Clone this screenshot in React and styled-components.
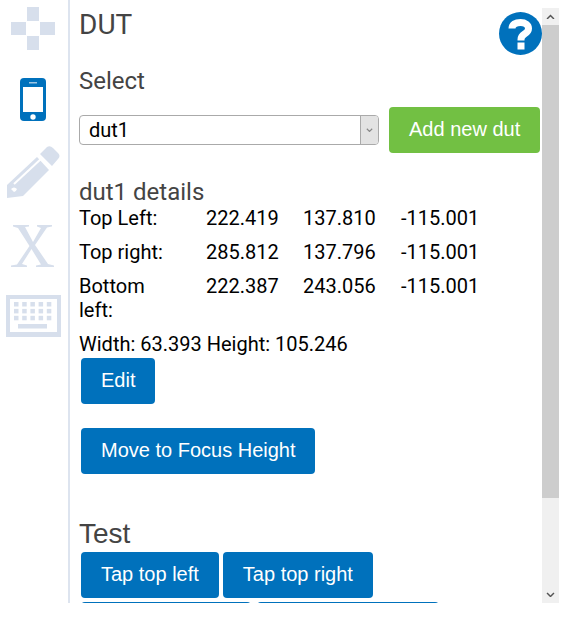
import React from 'react';
import styled, { createGlobalStyle } from 'styled-components';

const Global = createGlobalStyle`
  html, body {
    margin: 0;
    padding: 0;
    background: #fff;
    overflow: hidden;
  }
  body {
    font-family: Roboto, "Liberation Sans", Arial, sans-serif;
  }
`;

const Page = styled.div`
  width: 562px;
  height: 620px;
  display: flex;
  align-items: flex-start;
`;

const Sidebar = styled.nav`
  width: 70px;
  height: 603px;
  flex: none;
  box-sizing: border-box;
  border-right: 2px solid #dde4ef;
  display: flex;
  flex-direction: column;
  align-items: center;
  padding-right: 2px;
`;

const IconSlot = styled.div`
  display: flex;
  margin-top: ${p => p.$top}px;
`;

const Scroller = styled.main`
  position: relative;
  width: 489px;
  height: 603px;
  flex: none;
  overflow: hidden;
  box-sizing: border-box;
  padding: 9px 0 0 9px;
`;

const HelpBadge = styled.div`
  position: absolute;
  top: 12px;
  right: 17px;
  width: 43px;
  height: 43px;
`;

const Title = styled.h1`
  margin: 0;
  font-size: 28px;
  line-height: 32px;
  font-weight: 400;
  color: #444;
`;

const SubTitle = styled.h2`
  margin: 25px 0 0;
  font-size: 24px;
  line-height: 30px;
  font-weight: 400;
  color: #444;
`;

const SelectRow = styled.div`
  display: flex;
  align-items: center;
  gap: 10px;
  margin-top: 11px;
`;

const Select = styled.div`
  width: 300px;
  height: 30px;
  box-sizing: border-box;
  border: 1px solid #aaa;
  border-radius: 4px;
  display: flex;
  align-items: center;
  justify-content: space-between;
  padding-left: 9px;
  font-size: 20px;
  color: #000;
  overflow: hidden;
`;

const Arrow = styled.span`
  width: 17px;
  height: 100%;
  background: #e3e3e3;
  border-left: 1px solid #aaa;
  display: flex;
  align-items: center;
  justify-content: center;
`;

const Button = styled.button`
  display: block;
  flex: none;
  width: ${p => (p.$w ? `${p.$w}px` : 'auto')};
  height: 46px;
  padding: 0 20px 2px;
  border: 0;
  border-radius: 4px;
  background: ${p => (p.$green ? '#72c043' : '#0071bc')};
  color: #fff;
  font-family: "Liberation Sans", Arial, sans-serif;
  font-size: 20px;
  white-space: nowrap;
`;

const DetailsTitle = styled.h3`
  margin: 27px 0 2px;
  font-size: 24px;
  line-height: 24px;
  font-weight: 400;
  color: #444;
`;

const Coordinates = styled.div`
  display: grid;
  grid-template-columns: 127px 97px 98px 90px;
  width: 412px;
  font-size: 20px;
  line-height: 24px;
  color: #000;
`;

const Cell = styled.div`
  padding-bottom: 10px;
  white-space: nowrap;
`;

const LabelCell = styled.div`
  padding: 0 30px 10px 0;
`;

const SizeLine = styled.div`
  font-size: 20px;
  line-height: 24px;
  color: #000;
`;

const ButtonRow = styled.div`
  display: flex;
  gap: 4px;
  padding-left: 2px;
  margin-top: ${p => p.$top || 0}px;
`;

const SecondRow = styled(ButtonRow)`
  gap: 6px;
`;

const TestTitle = styled.h2`
  margin: 43px 0 1px;
  font-family: "Liberation Sans", Arial, sans-serif;
  font-size: 28px;
  line-height: 34px;
  font-weight: 400;
  color: #444;
`;

const Scrollbar = styled.div`
  position: absolute;
  top: 8px;
  right: 0;
  width: 17px;
  height: 595px;
  background: #f0f0f0;
  display: flex;
  flex-direction: column;
  align-items: center;
`;

const ScrollEnd = styled.div`
  height: 17px;
  flex: none;
  display: flex;
  align-items: center;
  justify-content: center;
`;

const Thumb = styled.div`
  width: 100%;
  height: 473px;
  flex: none;
  background: #cdcdcd;
`;

const ScrollSpace = styled.div`
  flex: 1;
`;

const Plus = () => (
  <svg width="44" height="43" viewBox="0 0 44 43">
    <path fill="#d7dfec" d="M16 0h12v14H16zM16 29h12v14H16zM0 15h15v13H0zM29 15h15v13H29z" />
  </svg>
);

const Phone = () => (
  <svg width="28" height="44" viewBox="0 0 28 44">
    <rect width="26" height="43" x="1" rx="4" fill="#0071bc" />
    <rect x="4" y="9" width="20" height="25" fill="#fff" />
    <rect x="10" y="4" width="8" height="1.5" fill="#9cc6e4" />
    <circle cx="14" cy="39" r="2.7" fill="#fff" />
  </svg>
);

const Pencil = () => (
  <svg width="54" height="52" viewBox="0 0 54 52">
    <path fill="#d7dfec" d="M31 11 43 24 17 50 1 52 1 39Z" />
    <path fill="#d7dfec" d="M34 8 41 1Q44-1 47 2L52 7Q55 10 52 13L46 20Z" />
    <path stroke="#fff" strokeWidth="2" fill="none" d="M8 38 36 12" />
    <path fill="#fff" d="M5 43q3-3 6 0q-1 3-3 3z" />
  </svg>
);

const XMark = () => (
  <svg width="44" height="42" viewBox="0 0 44 42">
    <path fill="#d7dfec" d="M2 0h16v1.5l-4 .5L22 17 30 3l-4-1.500V0h15v1.500l-5 1L24 20l13 19 6 1.500V42H25v-1.500l5-1L20.500 24 11 39l5 1.500V42H0v-1.500l6-1L18.500 21 7 3 2 1.500Z" />
  </svg>
);

const Keyboard = () => {
  const keys = [];
  for (let row = 0; row < 3; row++) {
    for (let col = 0; col < 5; col++) {
      keys.push(<rect key={`${row}-${col}`} x={8 + col * 8.2} y={7 + row * 6.900} width="4.500" height="4.500" fill="#d7dfec" />);
    }
  }
  return (
    <svg width="55" height="42" viewBox="0 0 55 42">
      <path fill="#d7dfec" fillRule="evenodd" d="M0 0h55v42H0ZM4 4v33h47V4Z" />
      {keys}
      <rect x="12" y="29" width="29" height="4.500" fill="#d7dfec" />
    </svg>
  );
};

const Help = () => (
  <svg width="43" height="43" viewBox="0 0 43 43">
    <circle cx="21.500" cy="21.500" r="21.500" fill="#0071bc" />
    <path fill="none" stroke="#fff" strokeWidth="7" d="M13 16.500c0-4 3.500-6 8.500-6s8 2.500 8 6c0 3-1.500 4-4 5.500-2.500 1.500-3.500 2.500-3.500 5.500v1" />
    <rect x="18.500" y="30.500" width="7" height="7" fill="#fff" />
  </svg>
);

const Chevron = ({ up, color = '#555', size = 9 }) => (
  <svg width={size} height={size * 0.66} viewBox="0 0 9 6">
    <path fill="none" stroke={color} strokeWidth="1.500" d={up ? 'M1 5l3.500-3.500L8 5' : 'M1 1l3.500 3.500L8 1'} />
  </svg>
);

const rows = [
  ['Top Left:', '222.419', '137.810', '-115.001'],
  ['Top right:', '285.812', '137.796', '-115.001'],
  ['Bottom left:', '222.387', '243.056', '-115.001'],
];

export default function App() {
  return (
    <Page>
      <Global />
      <Sidebar>
        <IconSlot $top={7}><Plus /></IconSlot>
        <IconSlot $top={28}><Phone /></IconSlot>
        <IconSlot $top={24}><Pencil /></IconSlot>
        <IconSlot $top={27}><XMark /></IconSlot>
        <IconSlot $top={28}><Keyboard /></IconSlot>
      </Sidebar>
      <Scroller>
        <HelpBadge>
          <Help />
        </HelpBadge>
        <Title>DUT</Title>
        <SubTitle>Select</SubTitle>
        <SelectRow>
          <Select>
            dut1
            <Arrow><Chevron color="#888" size={7} /></Arrow>
          </Select>
          <Button $green>Add new dut</Button>
        </SelectRow>
        <DetailsTitle>dut1 details</DetailsTitle>
        <Coordinates>
          {rows.map(([label, x, y, z]) => (
            <React.Fragment key={label}>
              <LabelCell>{label}</LabelCell>
              <Cell>{x}</Cell>
              <Cell>{y}</Cell>
              <Cell>{z}</Cell>
            </React.Fragment>
          ))}
        </Coordinates>
        <SizeLine>Width: 63.393 Height: 105.246</SizeLine>
        <ButtonRow $top={2}><Button>Edit</Button></ButtonRow>
        <ButtonRow $top={24}><Button $w={234}>Move to Focus Height</Button></ButtonRow>
        <TestTitle>Test</TestTitle>
        <ButtonRow>
          <Button>Tap top left</Button>
          <Button>Tap top right</Button>
        </ButtonRow>
        <SecondRow $top={4}>
          <Button $w={170} />
          <Button $w={182} />
        </SecondRow>
        <Scrollbar>
          <ScrollEnd><Chevron up /></ScrollEnd>
          <Thumb />
          <ScrollSpace />
          <ScrollEnd><Chevron /></ScrollEnd>
        </Scrollbar>
      </Scroller>
    </Page>
  );
}
